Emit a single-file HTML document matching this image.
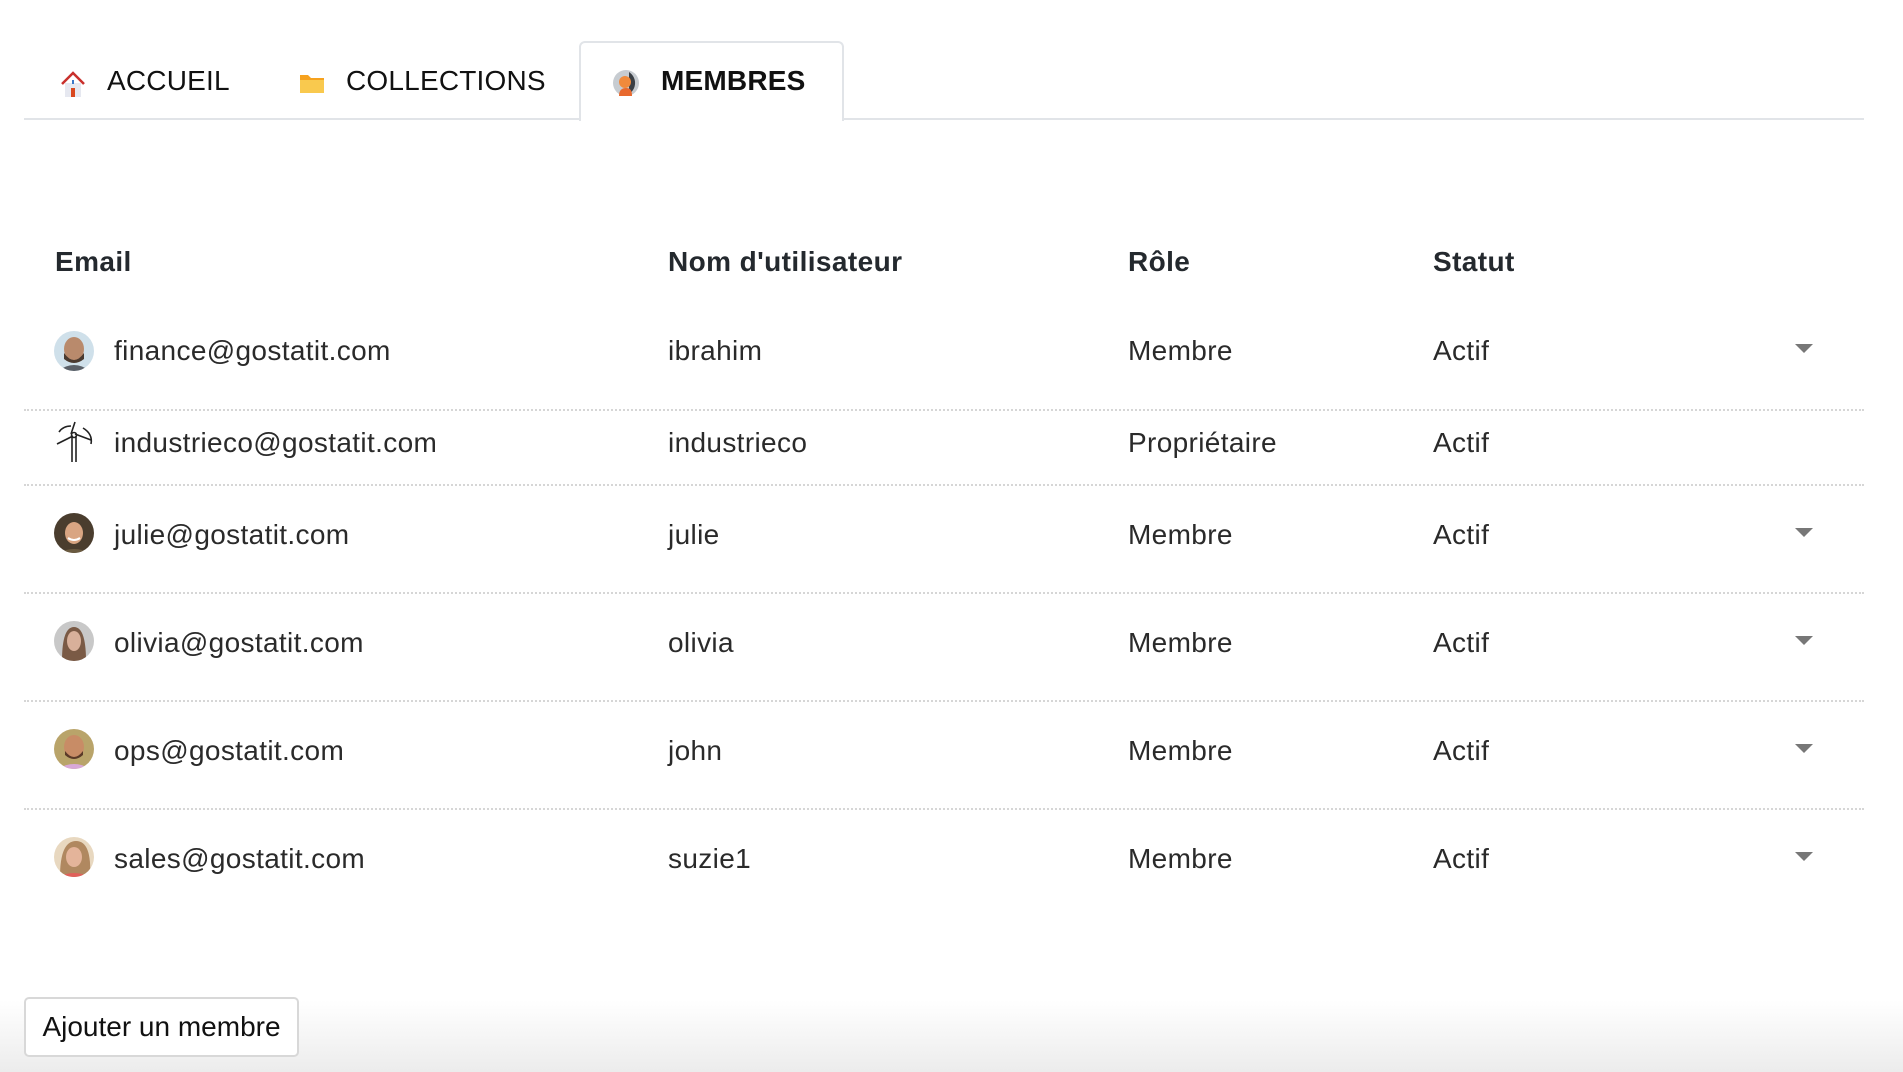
<!DOCTYPE html>
<html><head><meta charset="utf-8"><style>
*{margin:0;padding:0;box-sizing:border-box}
html,body{width:1903px;height:1072px;overflow:hidden;background:#fff;font-family:"Liberation Sans",Arial,sans-serif;color:#222}
.abs{position:absolute}
.tabline{position:absolute;left:24px;top:118px;width:1840px;height:2px;background:#e1e4e8}
.tab{position:absolute;top:56px;font-size:28px;line-height:50px;color:#111;white-space:nowrap;letter-spacing:0.2px}
.active{position:absolute;left:579px;top:41px;width:265px;height:80px;border:2px solid #e1e4e8;border-bottom:none;border-radius:6px 6px 0 0;background:#fff}
.th{position:absolute;top:244px;font-size:28px;font-weight:bold;line-height:36px;color:#24292e;letter-spacing:0.4px}
.td{position:absolute;font-size:28px;line-height:36px;color:#2a2a2a;white-space:nowrap;letter-spacing:0.35px}
.sep{position:absolute;left:24px;width:1840px;height:0;border-top:2px dotted #d6d6d6}
.av{position:absolute;left:54px;width:40px;height:40px;border-radius:50%;overflow:hidden}
.caret{position:absolute;left:1795px;width:0;height:0;border-left:9px solid transparent;border-right:9px solid transparent;border-top:9px solid #777}
.btn{position:absolute;left:24px;top:997px;width:275px;height:60px;border:2px solid #d8d8d8;border-radius:5px;background:#fff;font-size:28px;line-height:56px;text-align:center;color:#111}
.grad{position:absolute;left:0;top:1000px;width:1903px;height:72px;background:linear-gradient(#fff,#ececec)}
</style></head><body>
<div class="tabline"></div>
<div class="active"></div>
<svg class="abs" style="left:61px;top:71px" width="24" height="26" viewBox="0 0 24 26"><path d="M4 12h16v14H4z" fill="#e6e8f0"/><path d="M1 13L12 2l11 11" fill="none" stroke="#c9302c" stroke-width="2.5"/><path d="M10 17h4v9h-4z" fill="#d9481f"/><path d="M11 9h2v4h-2z" fill="#3a78c9"/></svg>
<div class="tab" style="left:107px">ACCUEIL</div>
<svg class="abs" style="left:299px;top:72px" width="26" height="22" viewBox="0 0 26 22"><path d="M1 3h8l3 3h13v15H1z" fill="#f6a21e"/><path d="M1 8h24v13H1z" fill="#f9c94e"/></svg>
<div class="tab" style="left:346px">COLLECTIONS</div>
<svg class="abs" style="left:613px;top:70px" width="26" height="26" viewBox="0 0 26 26"><circle cx="13" cy="13" r="13" fill="#c7ccd1"/><path d="M16 2a13 13 0 0 1 0 22z" fill="#3a3f45"/><circle cx="12" cy="12" r="6" fill="#f08a3c"/><path d="M6 26c0-6 3-8 7-8s6 2 6 8z" fill="#e8692e"/></svg>
<div class="tab" style="left:661px;font-weight:bold">MEMBRES</div>

<div class="th" style="left:55px">Email</div>
<div class="th" style="left:668px">Nom d'utilisateur</div>
<div class="th" style="left:1128px">Rôle</div>
<div class="th" style="left:1433px">Statut</div>

<div class="av" style="top:331px"><svg width="40" height="40"><rect width="40" height="40" fill="#cfe0ea"/><ellipse cx="20" cy="18" rx="10" ry="12" fill="#b98a6c"/><path d="M10 22q10 14 20 0v6q-10 8-20 0z" fill="#4a3a30"/><path d="M4 40q16-12 32 0z" fill="#5a6068"/></svg></div>
<div class="td" style="left:114px;top:333px">finance@gostatit.com</div>
<div class="td" style="left:668px;top:333px">ibrahim</div>
<div class="td" style="left:1128px;top:333px">Membre</div>
<div class="td" style="left:1433px;top:333px">Actif</div>
<div class="caret" style="top:344px"></div>
<div class="sep" style="top:409px"></div>
<svg class="abs" style="left:53px;top:420px" width="42" height="42" viewBox="0 0 42 42" fill="none" stroke="#222" stroke-width="1.6"><path d="M19 42V16M23 42V16M18 14l4-12M22 14l16 6M20 16L4 24M6 12q4-6 12-6M30 8q10 6 8 16"/><circle cx="21" cy="15" r="2.5"/></svg>
<div class="td" style="left:114px;top:425px">industrieco@gostatit.com</div>
<div class="td" style="left:668px;top:425px">industrieco</div>
<div class="td" style="left:1128px;top:425px">Propriétaire</div>
<div class="td" style="left:1433px;top:425px">Actif</div>
<div class="sep" style="top:484px"></div>
<div class="av" style="top:513px"><svg width="40" height="40"><rect width="40" height="40" fill="#4a3d2e"/><ellipse cx="20" cy="20" rx="9" ry="11" fill="#d9a582"/><path d="M14 25q6 4 12 0" stroke="#fff" stroke-width="2" fill="none"/><path d="M4 40q16-8 32 0z" fill="#6a5a40"/></svg></div>
<div class="td" style="left:114px;top:517px">julie@gostatit.com</div>
<div class="td" style="left:668px;top:517px">julie</div>
<div class="td" style="left:1128px;top:517px">Membre</div>
<div class="td" style="left:1433px;top:517px">Actif</div>
<div class="caret" style="top:528px"></div>
<div class="sep" style="top:592px"></div>
<div class="av" style="top:621px"><svg width="40" height="40"><rect width="40" height="40" fill="#c8c8c8"/><path d="M8 40q0-34 12-34t12 34z" fill="#7a5a45"/><ellipse cx="20" cy="20" rx="7" ry="10" fill="#d8b09a"/></svg></div>
<div class="td" style="left:114px;top:625px">olivia@gostatit.com</div>
<div class="td" style="left:668px;top:625px">olivia</div>
<div class="td" style="left:1128px;top:625px">Membre</div>
<div class="td" style="left:1433px;top:625px">Actif</div>
<div class="caret" style="top:636px"></div>
<div class="sep" style="top:700px"></div>
<div class="av" style="top:729px"><svg width="40" height="40"><rect width="40" height="40" fill="#b9a46a"/><ellipse cx="20" cy="18" rx="10" ry="12" fill="#c88c66"/><path d="M11 22q9 12 18 0v4q-9 8-18 0z" fill="#5a3a28"/><path d="M4 40q16-10 32 0z" fill="#d8a8d8"/></svg></div>
<div class="td" style="left:114px;top:733px">ops@gostatit.com</div>
<div class="td" style="left:668px;top:733px">john</div>
<div class="td" style="left:1128px;top:733px">Membre</div>
<div class="td" style="left:1433px;top:733px">Actif</div>
<div class="caret" style="top:744px"></div>
<div class="sep" style="top:808px"></div>
<div class="av" style="top:837px"><svg width="40" height="40"><rect width="40" height="40" fill="#e8d8c0"/><path d="M6 40q0-36 16-36t14 36z" fill="#b08860"/><ellipse cx="20" cy="20" rx="8" ry="10" fill="#e4b49a"/><path d="M4 40q16-8 32 0z" fill="#e0605a"/></svg></div>
<div class="td" style="left:114px;top:841px">sales@gostatit.com</div>
<div class="td" style="left:668px;top:841px">suzie1</div>
<div class="td" style="left:1128px;top:841px">Membre</div>
<div class="td" style="left:1433px;top:841px">Actif</div>
<div class="caret" style="top:852px"></div>

<div class="grad"></div>
<div class="btn">Ajouter un membre</div>
</body></html>
